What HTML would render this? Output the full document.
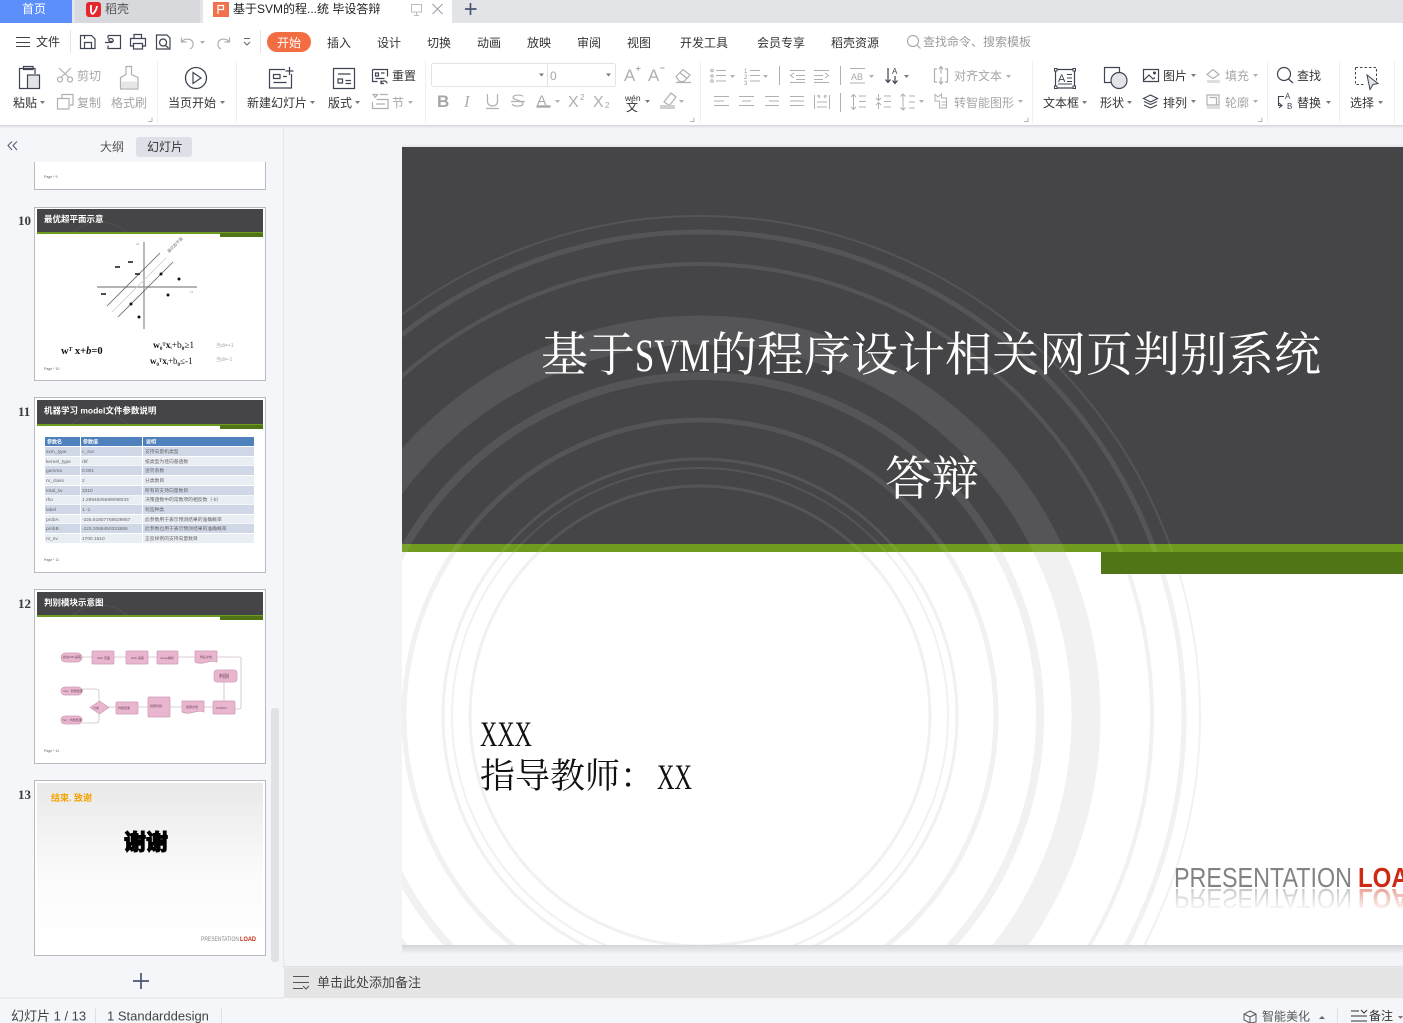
<!DOCTYPE html>
<html lang="zh"><head><meta charset="utf-8"><title>WPS</title>
<style>
html,body{margin:0;padding:0;width:1403px;height:1023px;overflow:hidden;background:#f3f4f7}
svg{display:block;position:absolute;left:0;top:0}
text{font-family:"Liberation Sans","Noto Sans CJK SC",sans-serif;font-size:12px;fill:#333}
.g{fill:#a6a6a6}
.s{font-family:"Liberation Serif","Noto Serif CJK SC",serif;font-weight:400}
.n{font-family:"Liberation Serif",serif;font-weight:bold;font-size:13px;fill:#3a3a3a}
.th{font-size:8.5px;font-weight:bold;fill:#fff}
.pg{font-size:3.5px;fill:#666}
.tb{font-size:4.8px;fill:#666}
.tw{font-size:5px;fill:#fff;font-weight:bold}
.fl{font-size:3px;fill:#6b4a5a}
.i{fill:none;stroke:#3f4452;stroke-width:1.2}
.ig{fill:none;stroke:#b0b0b0;stroke-width:1.2}
.bl{filter:blur(.3px)}
</style></head><body>
<svg width="1403" height="1023" viewBox="0 0 1403 1023" xmlns="http://www.w3.org/2000/svg">
<defs>
<path id="c" d="M0 0h5l-2.500 3z" fill="#7a7a7a"/>
<path id="cg" d="M0 0h5l-2.500 3z" fill="#b0b0b0"/>
<path id="cr" d="M0 4.500h4v-4" fill="none" stroke="#b5b5b5"/>
<linearGradient id="sh" x1="0" y1="0" x2="0" y2="1"><stop offset="0" stop-color="#d4d5d8"/><stop offset="1" stop-color="#f3f4f7"/></linearGradient>
<linearGradient id="sh2" x1="0" y1="0" x2="0" y2="1"><stop offset="0" stop-color="#f3f4f7"/><stop offset="1" stop-color="#e4e5e8"/></linearGradient>
<linearGradient id="fade" x1="0" y1="0" x2="0" y2="1"><stop offset="0" stop-color="#fff" stop-opacity=".35"/><stop offset="1" stop-color="#fff" stop-opacity="1"/></linearGradient>
<linearGradient id="t13" x1="0" y1="0" x2="0" y2="1"><stop offset="0" stop-color="#e9e9e9"/><stop offset=".55" stop-color="#fbfbfb"/><stop offset="1" stop-color="#fff"/></linearGradient>
<clipPath id="dark"><rect x="402" y="147" width="1001" height="397"/></clipPath>
<clipPath id="light"><rect x="402" y="552" width="1001" height="393"/></clipPath>
<clipPath id="mid"><rect x="402" y="544" width="1001" height="8"/></clipPath>
<clipPath id="t9"><rect x="0" y="162" width="284" height="40"/></clipPath>
<clipPath id="h10"><rect x="37" y="209" width="226" height="23"/></clipPath>
<clipPath id="h11"><rect x="37" y="400" width="226" height="24"/></clipPath>
<clipPath id="h12"><rect x="37" y="592" width="226" height="23"/></clipPath>
<g id="rings" fill="none">
<circle cx="700" cy="716" r="230" stroke-width="3"/>
<circle cx="700" cy="716" r="248" stroke-width="2"/>
<circle cx="700" cy="716" r="257" stroke-width="3"/>
<circle cx="700" cy="716" r="296" stroke-width="5"/>
<circle cx="700" cy="716" r="340" stroke-width="8"/>
<circle cx="700" cy="716" r="386" stroke-width="29"/>
<circle cx="700" cy="716" r="452" stroke-width="4"/>
<circle cx="700" cy="716" r="484" stroke-width="5"/>
<circle cx="700" cy="716" r="500" stroke-width="2"/>
</g>
</defs>

<!-- tab strip -->
<rect width="1403" height="1023" fill="#f3f4f7"/>
<rect width="1403" height="23" fill="#e2e4e8"/>
<rect width="72" height="23" fill="#5c8ffc"/>
<text x="22" y="13" style="fill:#fff">首页</text>
<rect x="75" width="125" height="23" fill="#d8d9dd"/>
<rect x="86" y="2" width="15" height="15" rx="3" fill="#e7262b"/>
<path d="M91 5v6c0 2 1 3 2 3M97 6c-.500 4-2 6-4 8" fill="none" stroke="#fff" stroke-width="1.800"/>
<text x="105" y="13" style="fill:#555">稻壳</text>
<rect x="203" width="249" height="23" fill="#fff"/>
<rect x="213" y="2" width="16" height="15" fill="#f2714c"/>
<path d="M218 14V5.500h5.500v4H218" fill="none" stroke="#fff" stroke-width="1.200"/>
<text x="233" y="13" style="fill:#222">基于SVM的程...统 毕设答辩</text>
<path d="M411.500 4.500h10v7.500h-10zM416.500 12v3M414 15.500h5" fill="none" stroke="#b8bcc4"/>
<path d="M432.500 4l10 10M442.500 4l-10 10" stroke="#9a9ea8" fill="none"/>
<path d="M470.500 3v12M465 9h11.500" stroke="#4a5570" stroke-width="1.700" fill="none"/>

<!-- ribbon -->
<rect y="23" width="1403" height="102" fill="#fff"/>
<rect y="125" width="1403" height="3" fill="url(#sh)"/>
<path d="M16 37.500h14M16 42.500h14M16 46.500h14" stroke="#444" fill="none"/>
<text x="36" y="46">文件</text>
<path d="M70.500 30v23M260.500 30v23" stroke="#e3e4e6"/>
<path class="i" d="M80.500 35.500h11l3.500 3.500v9.500H80.500zM84.500 48.500v-6h7v6M84.500 35.500v3.500"/>
<path class="i" d="M108 35.500h12.500v13H108v-3M108 38.500v-3M105 42.500h6c3 0 3-4 0-4s-3 3 0 3h2"/>
<path class="i" d="M134 38.500v-4h7.500v4M133.500 46h-3v-7.500h15V46h-3M133.500 43.500h9v5.500h-9z"/>
<path class="i" d="M156.500 35h10.500l3 3v11h-13.500zM163 39a3.500 3.500 0 1 0 .1 0zM165.500 45.500l3 2.500"/>
<path class="ig" d="M181.500 37.500v4.500h5M182 42c2-4 10-4 11 1 .5 3-1 5-3 6"/>
<use href="#cg" x="200" y="41"/>
<path class="ig" d="M229.500 37.500v4.500h-5M229 42c-2-4-10-4-11 1-.5 3 1 5 3 6"/>
<path d="M244 38.500h6M244 42l3 3 3-3" fill="none" stroke="#666"/>
<rect x="267" y="32" width="44" height="20" rx="10" fill="#f36d43"/>
<text x="277" y="47" style="fill:#fff">开始</text>
<text x="327" y="47">插入</text><text x="377" y="47">设计</text><text x="427" y="47">切换</text>
<text x="477" y="47">动画</text><text x="527" y="47">放映</text><text x="577" y="47">审阅</text>
<text x="627" y="47">视图</text><text x="680" y="47">开发工具</text><text x="757" y="47">会员专享</text>
<text x="831" y="47">稻壳资源</text>
<circle cx="913" cy="41" r="5.500" fill="none" stroke="#a9adb5" stroke-width="1.200"/><path d="M917 45l3.500 3.500" stroke="#a9adb5" stroke-width="1.200"/>
<text x="923" y="46" style="fill:#9b9b9b">查找命令、搜索模板</text>

<!-- separators -->
<path d="M157.500 61v62M236.500 61v62M425.500 61v62M700.500 61v62M1032.500 61v62M1267.500 61v62M1339.500 61v62M1394.500 61v62" stroke="#eeeff1"/>

<!-- clipboard -->
<path class="i" d="M35 74V68.500h-15.500v20H27"/>
<path class="i" d="M23.500 69.500v-3h9.500v3z"/>
<rect x="27.500" y="75" width="12" height="13.500" fill="#e3e4e7" stroke="#3f4452" stroke-width="1.200"/>
<text x="13" y="107">粘贴</text><use href="#c" x="40" y="101"/>
<path class="ig" d="M59 68l10 9.500M71 68l-10 9.500"/><circle class="ig" cx="60" cy="79.500" r="2.500"/><circle class="ig" cx="70" cy="79.500" r="2.500"/>
<text x="77" y="80" class="g">剪切</text>
<path class="ig" d="M62 98v-3.500h11V105h-3M57.500 98.500h11.500v10.500h-11.500z"/>
<text x="77" y="107" class="g">复制</text>
<path class="ig" d="M126 66.500h5.500v8l6.500 3v11.500h-17.500V77.500l5.500-3z"/><path d="M121 81.500h16.500v7h-16.500z" fill="#e6e6e6"/>
<text x="111" y="107" class="g">格式刷</text>
<use href="#cr" x="148" y="117"/>
<!-- play -->
<circle class="i" cx="196" cy="78" r="10.500" style="stroke-width:1.300"/><path class="i" d="M193 72.500l8 5.500-8 5.500z"/>
<text x="168" y="107">当页开始</text><use href="#c" x="220" y="101"/>
<!-- new slide -->
<path class="i" d="M285 69.500h-15.500v18.500h22v-14M273.500 74.500h6.500v4h-6.500zM273.500 82.500h13M283 76.500h4"/>
<path class="i" d="M289.500 67v8M285.500 71h8"/>
<text x="247" y="107">新建幻灯片</text><use href="#c" x="310" y="101"/>
<path class="i" d="M333.500 68.500h21v20h-21zM338 74h12.500M338 79h4.500v4H338zM345.500 80.500h5.500M345.500 83.500h5.500"/>
<text x="328" y="107">版式</text><use href="#c" x="355" y="101"/>
<path class="i" d="M372.500 69.500h15v7M372.500 69.500v12h5M375.500 73h3v3h-3zM381 73h3.500M375.500 78.500h9"/><path class="i" d="M381 83c1.500-3.500 6-2 6 .5M381 80.500v3h3"/>
<text x="392" y="80">重置</text>
<path class="ig" d="M373 94.500h4.500l-2.300 3zM380 94.500h8M376.500 99.500h11.500v9h-15.500v-6.500M376 104h9"/>
<text x="392" y="107" class="g">节</text><use href="#cg" x="408" y="101"/>
<!-- font -->
<rect x="431.500" y="63.500" width="184" height="23" rx="2" fill="#fff" stroke="#e3e3e3"/>
<path d="M547.500 64v22" stroke="#e3e3e3"/>
<use href="#c" x="539" y="73.500"/><use href="#c" x="606" y="73.500"/>
<text x="550" y="80" class="g">0</text>
<text x="624" y="81" style="fill:#b0b0b0;font-size:17px">A</text><path d="M636 68.500h4.500M638.200 66.500v4.500" stroke="#aaa" fill="none"/>
<text x="648" y="81" style="fill:#b0b0b0;font-size:17px">A</text><path d="M660 68h4.500" stroke="#aaa"/>
<path class="ig" d="M676 76.500l7-7 7 5.500-6 6.500h-4.500zM679.500 72.500l7 5.500M676 82.500h15"/>
<text x="437" y="107" style="fill:#a6a6a6;font-size:17px;font-weight:bold">B</text>
<text x="464" y="107" style="fill:#b0b0b0;font-size:17px;font-style:italic;font-family:'Liberation Serif',serif">I</text>
<path class="ig" d="M487.500 94v7.500c0 6 10 6 10 0V94M486 108.500h13"/>
<path class="ig" d="M523 96.500c-1-2-9-2-10 .5-.5 3 10 3.500 10 7 0 2.500-9 3-11 0M511 101.500h14"/>
<text x="537" y="105" style="fill:#a6a6a6;font-size:14px">A</text><path d="M536.500 106.500h14" stroke="#a6a6a6" stroke-width="2.400"/><use href="#cg" x="555" y="100"/>
<text x="568" y="107" style="fill:#b0b0b0;font-size:16px">X</text><text x="580" y="100" style="fill:#a6a6a6;font-size:8px">2</text>
<text x="593" y="107" style="fill:#b0b0b0;font-size:16px">X</text><text x="605" y="108" style="fill:#a6a6a6;font-size:8px">2</text>
<text x="625" y="101" style="font-size:8.500px;fill:#333">wén</text><text x="626" y="111" style="font-size:12px;fill:#333">文</text><use href="#c" x="645" y="100"/>
<path class="ig" d="M664 102l7-9 5 4-6.500 8.500z"/><path d="M660 105h15v4h-15z" fill="#d0d0d0"/><use href="#cg" x="679" y="100"/>
<use href="#cr" x="690" y="117"/>
<!-- paragraph -->
<g fill="none" stroke="#b0b0b0">
<circle cx="712" cy="70.500" r="1.300"/><circle cx="712" cy="76" r="1.300"/><circle cx="712" cy="81" r="1.300"/><path d="M716 70.500h10M716 75.500h10M716 81h10"/>
<path d="M750 70.500h10M750 75.500h10M750 81h10M790 70.500h15M796 75.500h9M796 79.500h9M790 82.500h15M794 73l-3.500 2.500 3.500 2.500M814 70.500h15M814 75.500h9M814 79.500h9M814 82.500h15M825 73l3.500 2.500-3.500 2.500M779.500 66v19M840.500 66v19"/>
<path d="M850 68.500h15M850 83h15"/>
</g>
<text x="744" y="73" style="font-size:6px;fill:#999">1</text><text x="744" y="79" style="font-size:6px;fill:#999">2</text><text x="744" y="85" style="font-size:6px;fill:#999">3</text>
<use href="#cg" x="730" y="75"/><use href="#cg" x="763" y="75"/>
<text x="851" y="80" style="font-size:9px;fill:#aaa">AB</text><use href="#cg" x="869" y="75"/>
<text x="892" y="74" style="font-size:8px;fill:#3f4452">A</text><path class="i" d="M888 68v14M885.500 79.500l2.500 3 2.500-3M895 76v7M892.500 80.500l2.500 3 2.500-3"/><use href="#c" x="904" y="75"/>
<path class="ig" d="M937 69h-2.500v13h2.500M945 69h2.500v13H945M941 66.500v7M939 69l2 -2.500 2 2.500M941 77v7M939 81.500l2 2.500 2-2.500"/>
<text x="954" y="80" class="g">对齐文本</text><use href="#cg" x="1006" y="75"/>
<g fill="none" stroke="#b0b0b0">
<path d="M714 96.500h15M714 101h10M714 105.500h15M739 96.500h15M742 101h9M739 105.500h15M765 96.500h14M769 101h10M765 105.500h14M790 96.500h14M790 101h14M790 105.500h14M814.500 95v14M829.500 95v14M817 107h10M817 102h10M817 96h2M825 96h2M820 96.500l-1.500-1.500M820 96.500l-1.500 1.500M824 96.500l1.500-1.500M824 96.500l1.500 1.500M840.500 93v19"/>
<path d="M853.500 95v14M851 97l2.500-2.500 2.500 2.500M851 107l2.500 2.500 2.500-2.500M859 96h7M859 101.500h7M859 107h7"/>
<path d="M878.500 94v6M876 98l2.500 2.500 2.500-2.500M878.500 103v6M876 105l2.500-2.500 2.500 2.500M884 96h7M884 101.500h7M884 107h7"/>
<path d="M903 94v16M900.500 96.500l2.500-2.500 2.500 2.500M900.500 107.500l2.500 2.500 2.500-2.500M909 96h6M909 102h6M909 108h6"/>
<path d="M935 94.500l3 2.500 3.500-3v4h5v10h-7v-7h-4.500zM941.500 102h5M941.500 105h5"/>
</g>
<use href="#cg" x="919" y="100"/>
<text x="954" y="107" class="g">转智能图形</text><use href="#cg" x="1018" y="100"/>
<use href="#cr" x="1024" y="117"/>
<!-- text box etc -->
<path class="i" d="M1055.500 69.500h19v18.500h-19z"/>
<g fill="#fff" stroke="#3f4452"><rect x="1054.500" y="68.500" width="2.500" height="2.500"/><rect x="1073" y="68.500" width="2.500" height="2.500"/><rect x="1054.500" y="86" width="2.500" height="2.500"/><rect x="1073" y="86" width="2.500" height="2.500"/></g>
<text x="1058" y="82" style="font-size:11px;fill:#3f4452">A</text><path d="M1067 74.500h5M1067 78h5M1067 81.500h5M1058 84h14" stroke="#3f4452" fill="none"/>
<text x="1043" y="107">文本框</text><use href="#c" x="1082" y="101"/>
<path class="i" d="M1104.500 67.500h15v15h-15z"/>
<circle cx="1119" cy="80.500" r="8" fill="#e3e4e7" stroke="#3f4452" stroke-width="1.200"/>
<text x="1100" y="107">形状</text><use href="#c" x="1127" y="101"/>
<path class="i" d="M1143.500 69.500h15v12h-15zM1144 80l5-5 4 4 2-1.500"/><circle cx="1154.500" cy="73" r="1.500" fill="#3f4452"/>
<text x="1163" y="80">图片</text><use href="#c" x="1191" y="74"/>
<path class="i" d="M1150.500 95l7 3.500-7 3.500-7-3.500zM1144 101.500l6.500 3 6.500-3M1144 105l6.500 3 6.500-3"/>
<text x="1163" y="107">排列</text><use href="#c" x="1191" y="100"/>
<path class="ig" d="M1207 74.500l6-5 6 5-6 4z"/><path d="M1207 80h13v3h-13z" fill="#dedede"/>
<text x="1225" y="80" class="g">填充</text><use href="#cg" x="1253" y="74"/>
<path class="ig" d="M1207 95h12v10h-12zM1209.500 97.500h7v7"/><path d="M1207 106h13v3h-13z" fill="#dedede"/>
<text x="1225" y="107" class="g">轮廓</text><use href="#cg" x="1253" y="100"/>
<use href="#cr" x="1258" y="117"/>
<circle class="i" cx="1284" cy="74" r="6.500"/><path class="i" d="M1288.500 79l4.500 4"/>
<text x="1297" y="80">查找</text>
<path class="i" d="M1284 96.500h-5.500v9h3M1279 108l3-2.500-3-2.500" style="stroke-width:1.100"/>
<text x="1285" y="99" style="font-size:8px;fill:#3f4452">A</text><text x="1287" y="109" style="font-size:8px;fill:#3f4452">B</text>
<text x="1297" y="107">替换</text><use href="#c" x="1326" y="101"/>
<path d="M1355.500 67.500h21v16" fill="none" stroke="#3f4452" stroke-dasharray="2.500 2"/><path d="M1355.500 67.500v17h9" fill="none" stroke="#3f4452" stroke-dasharray="2.500 2"/>
<path d="M1367 75l11 8.500-5 1-3 5z" fill="#e3e4e7" stroke="#3f4452"/>
<text x="1350" y="107">选择</text><use href="#c" x="1378" y="101"/>

<!-- left panel -->
<rect y="128" width="284" height="870" fill="#f5f6f9"/>
<rect x="283" y="128" width="1" height="840" fill="#e6e7ea"/>
<path d="M12 141.500l-4 4 4 4.500M17 141.500l-4 4 4 4.500" fill="none" stroke="#55606f" stroke-width="1.100"/>
<text x="100" y="151" style="fill:#555">大纲</text>
<rect x="136" y="137" width="56" height="20" rx="3" fill="#dde0e6"/>
<text x="147" y="151">幻灯片</text>

<!-- thumb 9 -->
<g clip-path="url(#t9)"><rect x="34.500" y="130" width="231" height="59.500" fill="#fff" stroke="#b9bbbe"/></g>
<text x="44" y="178" class="pg">Page * 9</text>

<!-- thumb 10 -->
<text x="18" y="225" class="n">10</text>
<rect x="34.500" y="207.500" width="231" height="173" fill="#fff" stroke="#b9bbbe"/>
<g class="bl">
<rect x="37" y="209" width="226" height="23" fill="#454547"/>
<g clip-path="url(#h10)"><circle cx="100" cy="262" r="40" fill="none" stroke="#525254"/></g>
<rect x="37" y="232" width="226" height="2" fill="#6d9c1e"/><rect x="220" y="233" width="43" height="4" fill="#4f7516"/>
<text x="44" y="222" class="th">最优超平面示意</text>
<path d="M97 287h100M144 242v87" stroke="#9b9b9b" stroke-width="1.400"/>
<path d="M107 306l53-53M118 317l55-55" stroke="#666" stroke-width=".8"/><path d="M112 312l54-54" stroke="#ccc" stroke-width=".8"/>
<path d="M115 267h5M128 262h5M135 274h5M101 294h5" stroke="#111" stroke-width="1.500"/>
<g fill="#111"><circle cx="161" cy="274" r="1.500"/><circle cx="179" cy="279" r="1.500"/><circle cx="168" cy="295" r="1.500"/><circle cx="131" cy="304" r="1.500"/><circle cx="139" cy="317" r="1.500"/></g>
<text x="169" y="253" transform="rotate(-45 169 253)" style="font-size:4px;fill:#777">最优超平面</text>
<text x="136" y="245" style="font-size:3px;fill:#888">x2</text><text x="190" y="293" style="font-size:3px;fill:#888">x1</text>
<text x="61" y="354" style="font-family:'Liberation Serif',serif;font-size:10.500px;font-weight:bold;fill:#111">w<tspan dy="-3" font-size="6" font-style="italic">T</tspan><tspan dy="3"> x+</tspan><tspan font-style="italic">b</tspan>=0</text>
<text x="153" y="348" style="font-family:'Liberation Serif',serif;font-size:9.500px;font-weight:bold;fill:#111">w<tspan dy="2" font-size="5">0</tspan><tspan dy="-4" font-size="5">T</tspan><tspan dy="2">x</tspan><tspan dy="1" font-size="4">i</tspan><tspan dy="-1" font-weight="normal">+b</tspan><tspan dy="2" font-size="5">0</tspan><tspan dy="-2" font-weight="normal">≥1</tspan></text>
<text x="150" y="364" style="font-family:'Liberation Serif',serif;font-size:9px;font-weight:bold;fill:#111">w<tspan dy="2" font-size="5">0</tspan><tspan dy="-4" font-size="5">T</tspan><tspan dy="2">x</tspan><tspan dy="1" font-size="4">i</tspan><tspan dy="-1" font-weight="normal">+b</tspan><tspan dy="2" font-size="5">0</tspan><tspan dy="-2" font-weight="normal">≤-1</tspan></text>
<text x="216" y="347" style="font-size:5px;fill:#aaa">当di=+1</text><text x="216" y="361" style="font-size:5px;fill:#aaa">当di=-1</text>
<text x="44" y="370" class="pg">Page * 10</text>
</g>

<!-- thumb 11 -->
<text x="18" y="416" class="n">11</text>
<rect x="34.500" y="397.500" width="231" height="175" fill="#fff" stroke="#b9bbbe"/>
<g class="bl">
<rect x="37" y="400" width="226" height="24" fill="#454547"/>
<g clip-path="url(#h11)"><circle cx="100" cy="453" r="40" fill="none" stroke="#525254"/></g>
<rect x="37" y="424" width="226" height="2" fill="#6d9c1e"/><rect x="220" y="425" width="43" height="4" fill="#4f7516"/>
<text x="44" y="413.500" class="th">机器学习 model文件参数说明</text>
<g fill="#4f81bd"><rect x="45" y="437" width="35" height="9"/><rect x="81" y="437" width="61" height="9"/><rect x="143" y="437" width="111" height="9"/></g>
<text x="47" y="443.500" class="tw">参数名</text><text x="83" y="443.500" class="tw">参数值</text><text x="146" y="443.500" class="tw">说明</text>
<g fill="#d0d8e8"><rect x="45" y="447" width="209" height="9"/><rect x="45" y="466" width="209" height="9"/><rect x="45" y="486" width="209" height="9"/><rect x="45" y="505" width="209" height="9"/><rect x="45" y="524" width="209" height="9"/></g>
<g fill="#e9edf4"><rect x="45" y="457" width="209" height="8.500"/><rect x="45" y="476" width="209" height="9"/><rect x="45" y="495.500" width="209" height="9"/><rect x="45" y="515" width="209" height="8.500"/><rect x="45" y="534" width="209" height="9"/></g>
<path d="M80.500 437v106M142.500 437v106" stroke="#fff"/>
<text class="tb" x="46" y="453">svm_type</text><text class="tb" x="82" y="453">c_svc</text><text class="tb" x="145" y="453">支持向量机类型</text>
<text class="tb" x="46" y="463">kernel_type</text><text class="tb" x="82" y="463">rbf</text><text class="tb" x="145" y="463">核类型为径向基函数</text>
<text class="tb" x="46" y="472">gamma</text><text class="tb" x="82" y="472">0.001</text><text class="tb" x="145" y="472">惩罚系数</text>
<text class="tb" x="46" y="482">nr_class</text><text class="tb" x="82" y="482">2</text><text class="tb" x="145" y="482">分类数目</text>
<text class="tb" x="46" y="492">total_sv</text><text class="tb" x="82" y="492">3310</text><text class="tb" x="145" y="492">所有的支持向量数目</text>
<text class="tb" x="46" y="501">rho</text><text class="tb" x="82" y="501">1.2984605699098033</text><text class="tb" x="145" y="501">决策函数中的常数项的相反数（-b）</text>
<text class="tb" x="46" y="511">label</text><text class="tb" x="82" y="511">1 -1</text><text class="tb" x="145" y="511">标签种类</text>
<text class="tb" x="46" y="521">probA</text><text class="tb" x="82" y="521">-225.61807766629957</text><text class="tb" x="145" y="521">此参数用于表示预测结果的准确概率</text>
<text class="tb" x="46" y="530">probB</text><text class="tb" x="82" y="530">-223.3068450333695</text><text class="tb" x="145" y="530">此参数也用于表示预测结果的准确概率</text>
<text class="tb" x="46" y="540">nr_sv</text><text class="tb" x="82" y="540">1700 1610</text><text class="tb" x="145" y="540">正反样例的支持向量数目</text>
<text x="44" y="561" class="pg">Page * 11</text>
</g>

<!-- thumb 12 -->
<text x="18" y="608" class="n">12</text>
<rect x="34.500" y="589.500" width="231" height="174" fill="#fff" stroke="#b9bbbe"/>
<g class="bl">
<rect x="37" y="592" width="226" height="23" fill="#454547"/>
<g clip-path="url(#h12)"><circle cx="100" cy="645" r="40" fill="none" stroke="#525254"/></g>
<rect x="37" y="615" width="226" height="2" fill="#6d9c1e"/><rect x="220" y="616" width="43" height="4" fill="#4f7516"/>
<text x="44" y="605.500" class="th">判别模块示意图</text>
<path d="M82 657h10M114 657h12M148 657h9M178 657h17M217 657h22q2 0 2 2v48q0 2-2 2h-4M224 682v19M213 707h-9M182 707h-12M148 707h-10M116 707h-7M99 701v-9q0-3-3-3H82M99 714v6q0 3-3 3H82" fill="none" stroke="#d3bcc8" stroke-width=".8"/>
<g fill="#eab6cf" stroke="#c99ab4" stroke-width=".7">
<rect x="61" y="653" width="21" height="9" rx="4.500"/>
<rect x="92" y="651" width="22" height="13" rx="1"/><rect x="126" y="651" width="22" height="13" rx="1"/><rect x="157" y="651" width="21" height="13" rx="1"/>
<path d="M195 651h22v11c-7-3-14 4-22 0z"/>
<rect x="214" y="670" width="23" height="12" rx="3"/>
<rect x="213" y="701" width="22" height="13" rx="1"/>
<path d="M182 701h22v11c-7-3-14 4-22 0z"/>
<rect x="148" y="697" width="22" height="20" rx="1"/>
<rect x="116" y="702" width="22" height="12" rx="1"/>
<path d="M90 707.500l9.500-6.500 9.500 6.500-9.500 6.500z"/>
<rect x="61" y="687" width="21" height="8" rx="4"/><rect x="61" y="716" width="21" height="8" rx="4"/>
</g>
<text x="63" y="658" class="fl">爬虫URL提取</text><text x="97" y="659" class="fl">Web 页面</text><text x="131" y="659" class="fl">Web 提取</text><text x="160" y="659" class="fl">Jsoup解析</text><text x="200" y="658" class="fl">特征文档</text>
<text x="219" y="678" style="font-size:5px;fill:#5a3f4d">判别</text>
<text x="216" y="709" class="fl">SVMPre</text><text x="186" y="708" class="fl">结果文档</text><text x="150" y="707" class="fl">结果判别</text><text x="118" y="709" class="fl">判断结果</text><text x="93" y="709" class="fl">分类</text>
<text x="63" y="692" class="fl">Yes：判断结果</text><text x="63" y="721" class="fl">No：判断结果</text>
<text x="44" y="752" class="pg">Page * 12</text>
</g>

<!-- thumb 13 -->
<text x="18" y="799" class="n">13</text>
<rect x="34.500" y="780.500" width="231" height="175" fill="#fff" stroke="#b9bbbe"/>
<rect x="37" y="783" width="226" height="170" fill="url(#t13)"/>
<g class="bl">
<text x="51" y="801" style="font-size:9px;font-weight:bold;fill:#f5a400">结束. 致谢</text>
<text x="124" y="850" style="font-size:22px;font-weight:900;fill:#000;stroke:#000;stroke-width:1">谢谢</text>
<text x="201" y="941" style="font-size:6px;fill:#888" textLength="38" lengthAdjust="spacingAndGlyphs">PRESENTATION</text>
<text x="240" y="941" style="font-size:6px;font-weight:bold;fill:#cc2a12" textLength="16" lengthAdjust="spacingAndGlyphs">LOAD</text>
</g>

<!-- scrollbar + add -->
<rect x="271" y="708" width="8" height="254" rx="3" fill="#e0e2e5"/>
<path d="M141 973v16M133 981h16" stroke="#4a5570" stroke-width="1.700" fill="none"/>

<!-- canvas shadows -->
<rect x="284" y="128" width="1119" height="19" fill="#f3f4f7"/>
<rect x="402" y="144" width="1001" height="3" fill="url(#sh2)"/>

<!-- slide -->
<rect x="402" y="147" width="1001" height="798" fill="#fff"/>
<rect x="402" y="147" width="1001" height="397" fill="#454547"/>
<rect x="402" y="544" width="1001" height="8" fill="#6f9c1f"/>
<g clip-path="url(#dark)"><use href="#rings" stroke="#555557"/></g>
<g clip-path="url(#light)"><use href="#rings" stroke="#f1f1f1"/></g>
<g clip-path="url(#mid)"><use href="#rings" stroke="#7ba42f"/></g>
<rect x="1101" y="552" width="302" height="22" fill="#4f7516"/>

<text class="s" x="541" y="371" style="font-size:47px;fill:#fff">基于</text>
<text class="s" x="635" y="371" style="font-size:47px;fill:#fff" textLength="75" lengthAdjust="spacingAndGlyphs">SVM</text>
<text class="s" x="710" y="371" style="font-size:47px;fill:#fff">的程序设计相关网页判别系统</text>
<text class="s" x="885" y="495" style="font-size:47px;fill:#fff">答辩</text>
<text class="s" x="480" y="746" style="font-size:36px;fill:#111" textLength="52" lengthAdjust="spacingAndGlyphs">XXX</text>
<text class="s" x="480" y="788" style="font-size:35px;fill:#111">指导教师：</text>
<text class="s" x="657" y="789" style="font-size:36px;fill:#111" textLength="35" lengthAdjust="spacingAndGlyphs">XX</text>

<text x="1174" y="887" style="font-size:28px;fill:#838383" textLength="178" lengthAdjust="spacingAndGlyphs">PRESENTATION</text>
<text x="1358" y="887" style="font-size:28px;font-weight:bold;fill:#cc2a12" textLength="68" lengthAdjust="spacingAndGlyphs">LOAD</text>
<g transform="translate(0 1776) scale(1 -1)">
<text x="1174" y="887" style="font-size:28px;fill:#aaa" textLength="178" lengthAdjust="spacingAndGlyphs">PRESENTATION</text>
<text x="1358" y="887" style="font-size:28px;font-weight:bold;fill:#dd7766" textLength="68" lengthAdjust="spacingAndGlyphs">LOAD</text>
</g>
<rect x="1170" y="889" width="233" height="23" fill="url(#fade)"/>

<rect x="402" y="945" width="1001" height="9" fill="url(#sh)"/>
<rect x="284" y="966" width="1119" height="1.500" fill="#e0e1e3"/>

<!-- notes -->
<rect x="284" y="968" width="1119" height="30" fill="#e5e5e5"/>
<path d="M293 976.500h16M293 982.500h16M293 988.500h10M303 986l3 3 3-3" fill="none" stroke="#555"/>
<text x="317" y="987" style="font-size:13px;fill:#444">单击此处添加备注</text>

<!-- status bar -->
<rect y="998" width="1403" height="25" fill="#f5f6f9"/>
<rect y="997.500" width="284" height="1" fill="#e2e3e6"/>
<text x="11" y="1020.500" style="font-size:13px;fill:#444">幻灯片 1 / 13</text>
<path d="M95.500 1008v15M221.500 1008v15M1337.500 1008v15" stroke="#dfe0e3"/>
<text x="107" y="1020.500" style="font-size:13px;fill:#444">1 Standarddesign</text>
<path d="M1250 1011l6 3v8l-6 1-6-3v-6zM1244 1014l6 3 6-3M1250 1017v6" fill="none" stroke="#555"/>
<text x="1262" y="1020.500" style="fill:#555">智能美化</text>
<path d="M1319 1019h6l-3-3z" fill="#666"/>
<path d="M1351 1011h8M1351 1016h16M1351 1021h16M1361 1010l3 3 3-3" fill="none" stroke="#333"/>
<text x="1369" y="1020">备注</text>
<use href="#c" x="1398" y="1016"/>
</svg>
</body></html>
